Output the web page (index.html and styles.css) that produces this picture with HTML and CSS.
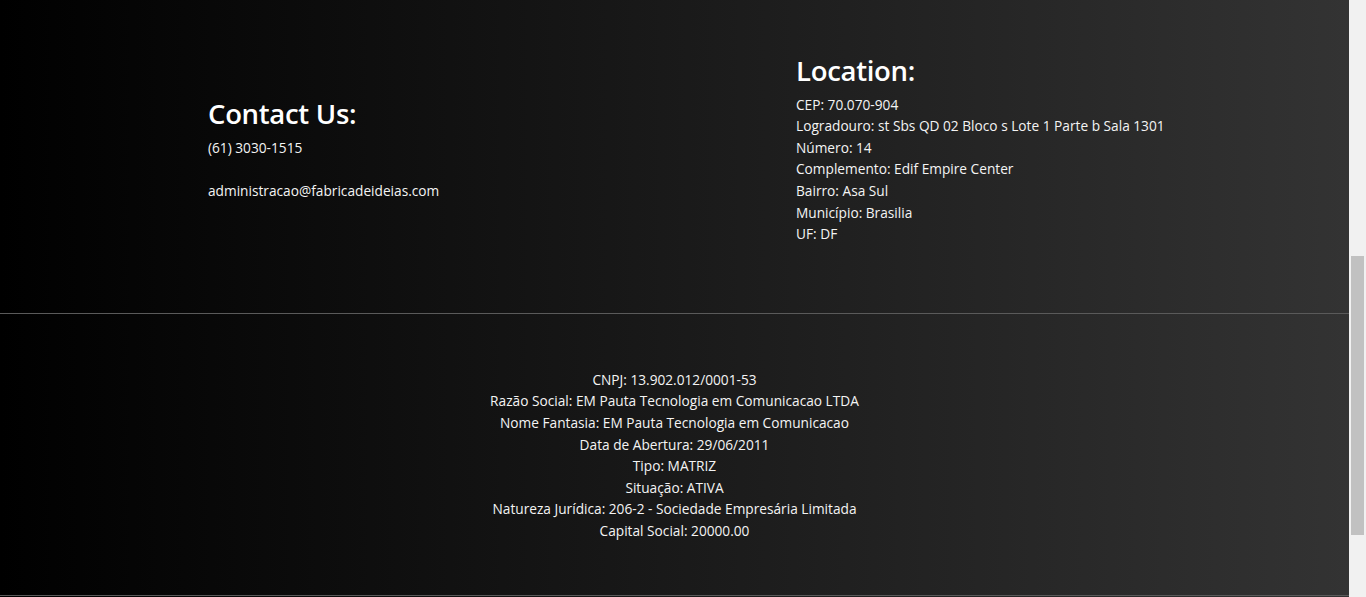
FILE: index.html
```html
<!DOCTYPE html>
<html lang="pt">
<head>
<meta charset="utf-8">
<title>Fábrica de Ideias</title>
<link rel="stylesheet" href="styles.css">
</head>
<body>
<div class="page">
  <footer class="footer">
    <div class="footer-top">
      <div class="contact">
        <h3 class="title">Contact Us:</h3>
        <p class="text">(61) 3030-1515<br><br>administracao@fabricadeideias.com</p>
      </div>
      <div class="location">
        <h3 class="title">Location:</h3>
        <p class="text">CEP: 70.070-904<br>Logradouro: st Sbs QD 02 Bloco s Lote 1 Parte b Sala 1301<br>Número: 14<br>Complemento: Edif Empire Center<br>Bairro: Asa Sul<br>Município: Brasilia<br>UF: DF</p>
      </div>
    </div>
    <div class="footer-bottom">
      <p class="text">CNPJ: 13.902.012/0001-53<br>Razão Social: EM Pauta Tecnologia em Comunicacao LTDA<br>Nome Fantasia: EM Pauta Tecnologia em Comunicacao<br>Data de Abertura: 29/06/2011<br>Tipo: MATRIZ<br>Situação: ATIVA<br>Natureza Jurídica: 206-2 - Sociedade Empresária Limitada<br>Capital Social: 20000.00</p>
    </div>
  </footer>
</div>
<div class="scrollbar"><div class="thumb"></div></div>
</body>
</html>
```
FILE: styles.css
```css
html,
body {
  height: 597px;
  overflow: hidden;
}
body {
  margin: 0;
  display: flex;
  font-family: "Open Sans", "Noto Sans", sans-serif;
  color: #f4f4f4;
  background: #111;
}
.page {
  flex: 1;
  background: linear-gradient(to right, #000, #333);
}
.footer-top {
  display: flex;
  align-items: center;
  padding: 54px 0 68px 208px;
  border-bottom: 1px solid #5a5a5a;
}
.contact {
  flex: 0 0 588px;
}
.title {
  margin: 0 0 6px 0;
  font-size: 27.5px;
  line-height: 33.6px;
  font-weight: 600;
  color: #fff;
  letter-spacing: -0.3px;
}
.text {
  margin: 0;
  font-size: 13.7px;
  line-height: 21.6px;
}
.footer-bottom {
  padding: 55px 0 53px;
  text-align: center;
  border-bottom: 1px solid #5a5a5a;
}
.scrollbar {
  flex: 0 0 17px;
  box-sizing: border-box;
  padding: 256px 2px 0;
  background: #f1f1f1;
}
.thumb {
  height: 279px;
  background: #c1c1c1;
}
```
